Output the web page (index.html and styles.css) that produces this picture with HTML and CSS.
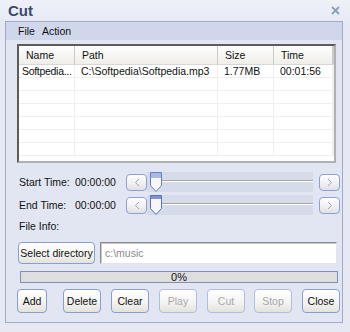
FILE: index.html
```html
<!DOCTYPE html>
<html>
<head>
  <meta charset="utf-8">
  <title>Cut</title>
  <link rel="stylesheet" href="styles.css">
</head>
<body>
<div class="window">
  <!-- title bar -->
  <div class="title-bar">
    <div class="title">Cut</div>
    <svg class="close" width="9" height="9" viewBox="0 0 9 9"><path d="M1 1 L8 8 M8 1 L1 8" stroke="#8d9cc4" stroke-width="1.8" fill="none"/></svg>
  </div>

  <div class="client">
    <div class="menu"><span>File</span><span>Action</span></div>

    <div class="content">
      <!-- file list -->
      <div class="list">
        <table>
          <tr><th class="c-name">Name</th><th class="c-path">Path</th><th class="c-size">Size</th><th class="c-time">Time</th><th></th></tr>
          <tr><td class="first">Softpedia...</td><td>C:\Softpedia\Softpedia.mp3</td><td>1.77MB</td><td>00:01:56</td><td></td></tr>
          <tr><td></td><td></td><td></td><td></td><td></td></tr>
          <tr><td></td><td></td><td></td><td></td><td></td></tr>
          <tr><td></td><td></td><td></td><td></td><td></td></tr>
          <tr><td></td><td></td><td></td><td></td><td></td></tr>
          <tr><td></td><td></td><td></td><td></td><td></td></tr>
          <tr><td></td><td></td><td></td><td></td><td></td></tr>
        </table>
      </div>

      <!-- start / end -->
      <div class="trim-row start">
        <span class="label">Start Time:</span>
        <span class="value">00:00:00</span>
        <button class="arrow"><svg width="6" height="9" viewBox="0 0 6 9"><path d="M5 1 L1.5 4.5 L5 8" stroke="#a4a4a4" fill="none"/></svg></button>
        <div class="track">
          <svg class="thumb" width="12" height="20" viewBox="0 0 12 20"><path d="M0.5 0.5 H11.5 V13.5 L6 19.5 L0.5 13.5 Z" fill="#f7f7fa" stroke="#6a7fc0"/><rect x="1" y="1" width="10" height="5" fill="#a9b8e4"/></svg>
        </div>
        <button class="arrow"><svg width="6" height="9" viewBox="0 0 6 9"><path d="M1 1 L4.5 4.5 L1 8" stroke="#a4a4a4" fill="none"/></svg></button>
      </div>
      <div class="trim-row end">
        <span class="label">End Time:</span>
        <span class="value">00:00:00</span>
        <button class="arrow"><svg width="6" height="9" viewBox="0 0 6 9"><path d="M5 1 L1.5 4.5 L5 8" stroke="#a4a4a4" fill="none"/></svg></button>
        <div class="track">
          <svg class="thumb" width="12" height="20" viewBox="0 0 12 20"><path d="M0.5 0.5 H11.5 V13.5 L6 19.5 L0.5 13.5 Z" fill="#f7f7fa" stroke="#5a70b8"/><rect x="1" y="1" width="10" height="3" fill="#8193d0"/></svg>
        </div>
        <button class="arrow"><svg width="6" height="9" viewBox="0 0 6 9"><path d="M1 1 L4.5 4.5 L1 8" stroke="#a4a4a4" fill="none"/></svg></button>
      </div>

      <div class="info">File Info:</div>

      <div class="dir-row">
        <button class="btn dir">Select directory</button>
        <div class="dir-box">c:\music</div>
      </div>

      <div class="progress">0%</div>

      <div class="buttons">
        <button class="btn b-add">Add</button>
        <button class="btn b-delete">Delete</button>
        <button class="btn">Clear</button>
        <button class="btn off">Play</button>
        <button class="btn off">Cut</button>
        <button class="btn off b-stop">Stop</button>
        <button class="btn b-close">Close</button>
      </div>
    </div>
  </div>
</div>
</body>
</html>
```

FILE: styles.css
```css
/* window */
body { margin: 0; background: #e9ecf6; font-family: "Liberation Sans", Arial, sans-serif; font-size: 10.5px; color: #111; }
button { font: inherit; color: #111; padding: 0; cursor: pointer; }
.window { width: 350px; height: 332px; background: linear-gradient(#eff1f9, #e6e9f4 24px, #e6e9f4); display: flex; flex-direction: column; overflow: hidden; }
.title-bar { height: 21px; display: flex; align-items: center; justify-content: space-between; padding: 0 10px 0 8px; box-sizing: border-box; }
.title { font-size: 15px; font-weight: bold; color: #3b4a6e; }
.client { margin: 0 7px 0 5px; height: 302px; border: 1px solid #a2abc6; box-sizing: border-box; background: #e2e6f2; display: flex; flex-direction: column; }
.menu { height: 18px; background: #d0d7eb; display: flex; align-items: center; gap: 7px; padding-left: 12px; }
.content { padding: 4px 2px 0 11px; display: flex; flex-direction: column; }

/* list */
.list { height: 119px; margin-right: 4px; background: #fff; border: 2px inset #b0b0b0; box-sizing: border-box; overflow: hidden; }
.list table { width: 100%; table-layout: fixed; border-collapse: collapse; }
.list th { height: 18px; padding: 0 0 0 7px; font-weight: normal; text-align: left; background: linear-gradient(#fdfdfd, #efeee9); border-right: 1px solid #cacaca; border-bottom: 1px solid #d8d8d8; }
.list td { height: 12px; padding: 0 0 0 6px; border-right: 1px solid #efefef; border-bottom: 1px solid #efefef; white-space: nowrap; overflow: hidden; line-height: 12px; }
.list td.first { padding-left: 3px; letter-spacing: -0.3px; }
.c-name { width: 48px; }
.c-path { width: 135px; }
.c-size { width: 48px; }
.c-time { width: 51px; }

/* start / end time */
.trim-row { height: 20px; display: flex; align-items: center; }
.trim-row.start { margin-top: 9px; }
.trim-row.end { margin-top: 3px; }
.trim-row .label { width: 58px; padding-left: 2px; box-sizing: border-box; }
.trim-row .value { width: 51px; }
.arrow { width: 21px; height: 17px; border: 1px solid #8ea1d2; border-radius: 4px; background: linear-gradient(#fefefe, #efeff2 60%, #dfdfe6); display: flex; align-items: center; justify-content: center; }
.track { flex: 1; height: 20px; margin-right: 6px; display: flex; align-items: flex-start;
  background: #d6dbea linear-gradient(to bottom, transparent 8px, #a2a2a2 8px, #a2a2a2 9px, #ffffff 9px, #ffffff 10px, transparent 10px) no-repeat 3px 0 / calc(100% - 3px) 100%; }
.thumb { margin-left: 3px; }

.info { margin-top: 4px; height: 14px; line-height: 14px; padding-left: 2px; }

/* directory */
.dir-row { margin-top: 9px; height: 22px; display: flex; }
.btn { height: 22px; border: 1px solid #8b9ed0; border-radius: 4px; background: linear-gradient(#ffffff, #f4f4f2 55%, #e3e2dc); }
.btn.dir { width: 77px; margin-left: 1px; }
.dir-box { flex: 1; margin: 0 3px 0 5px; background: #fff; border: 1px solid; border-color: #8c8c8c #e4e4e4 #e4e4e4 #8c8c8c; box-shadow: inset 1px 1px 0 #c8c8c8; box-sizing: border-box; color: #8a8a8a; padding-left: 4px; line-height: 20px; }

.progress { margin: 7px 2px 0 3px; height: 12px; box-sizing: border-box; background: #dedede; border: 1px solid #8290b4; text-align: center; line-height: 10px; font-size: 11px; }

/* bottom buttons */
.buttons { margin-top: 6px; display: flex; }
.buttons .btn { height: 24px; width: 38px; margin-left: 10px; }
.buttons .b-add { width: 30px; margin-left: 0; }
.buttons .b-delete { margin-left: 16px; }
.buttons .b-stop { margin-left: 9px; }
.buttons .off { color: #a8a8a8; border-color: #b0bde0; }
```
